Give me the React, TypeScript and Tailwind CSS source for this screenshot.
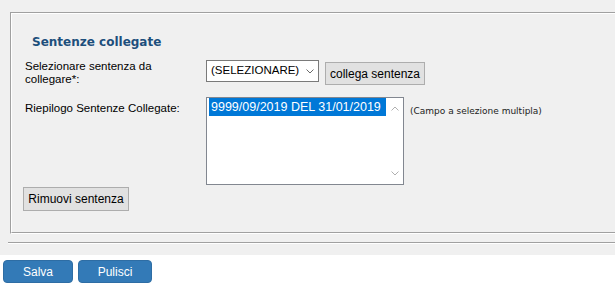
import React from "react";

const Chevron = ({ dir, color, w = 8, h = 5 }: { dir: "up" | "down"; color: string; w?: number; h?: number }) => (
  <svg width={w} height={h} viewBox="0 0 8 5" className="block">
    {dir === "down" ? (
      <polyline points="0.5,0.5 4,4 7.5,0.5" fill="none" stroke={color} strokeWidth="1" />
    ) : (
      <polyline points="0.5,4.5 4,1 7.5,4.5" fill="none" stroke={color} strokeWidth="1" />
    )}
  </svg>
);

export default function App() {
  return (
    <div className="w-[615px] h-[287px] overflow-hidden bg-white font-['Liberation_Sans',Arial,sans-serif] text-black">
      <div className="h-[255px] bg-[#f0f0f0] pt-[12px] pl-[8px]">
        <div className="ml-[2px] w-[640px] border border-t-[#a0a0a0] border-l-[#a0a0a0] border-b-white border-r-white">
          <div className="h-[220px] border border-t-white border-l-white border-b-[#a0a0a0] border-r-[#a0a0a0] pl-[13px] pt-[21px]">
            <div className="ml-[7px] h-[14px] leading-[14px] text-[12px] font-bold text-[#1d4f7c] font-['DejaVu_Sans',Verdana,sans-serif]">
              Sentenze collegate
            </div>

            <div className="mt-[11px] flex items-start">
              <div className="w-[181px] pr-[6px] text-[11.5px] leading-[13px]">
                Selezionare sentenza da collegare*:
              </div>
              <div className="w-[113px] h-[22px] bg-white border border-[#7a7a7a] flex items-center justify-between pl-[4px] pr-[4px] text-[11.5px]">
                <span>(SELEZIONARE)</span>
                <Chevron dir="down" color="#6a6a6a" w={8} h={5} />
              </div>
              <div className="ml-[6px] mt-[2px] w-[100px] h-[23px] bg-[#e1e1e1] border border-[#adadad] flex items-center justify-center text-[12px]">
                collega sentenza
              </div>
            </div>

            <div className="mt-[11px] flex items-start">
              <div className="w-[181px] pt-[5px] text-[11.5px] leading-[13px]">
                Riepilogo Sentenze Collegate:
              </div>
              <div className="w-[198px] h-[88px] bg-white border border-[#828790] flex">
                <div className="flex-1 pl-[2px] pt-[0px]">
                  <div className="w-[177px] h-[18px] bg-[#0078d7] text-white text-[12.5px] leading-[18px] pl-[2px] whitespace-nowrap">
                    9999/09/2019 DEL 31/01/2019
                  </div>
                </div>
                <div className="w-[17px] flex flex-col items-center justify-between pt-[8px] pb-[8px]">
                  <Chevron dir="up" color="#b0b0b0" w={8} h={5} />
                  <Chevron dir="down" color="#b0b0b0" w={8} h={5} />
                </div>
              </div>
              <div className="ml-[6px] mt-[9px] text-[9px] leading-[11px] text-[#222] font-['DejaVu_Sans',Verdana,sans-serif] whitespace-nowrap">
                (Campo a selezione multipla)
              </div>
            </div>

            <div className="mt-[2px] -ml-[2px] w-[106px] h-[24px] bg-[#e1e1e1] border border-[#adadad] flex items-center justify-center text-[12px]">
              Rimuovi sentenza
            </div>
          </div>
        </div>
        <div className="mt-[8px] w-[640px] border-t border-b border-t-[#a0a0a0] border-b-white" />
      </div>

      <div className="pt-[5px] pl-[3px] flex gap-[5px]">
        <div className="h-[23px] w-[70px] rounded-[4px] bg-[#337ab7] border border-[#2e6da4] text-white text-[12px] flex items-center justify-center">
          Salva
        </div>
        <div className="h-[23px] w-[74px] rounded-[4px] bg-[#337ab7] border border-[#2e6da4] text-white text-[12px] flex items-center justify-center">
          Pulisci
        </div>
      </div>
    </div>
  );
}
